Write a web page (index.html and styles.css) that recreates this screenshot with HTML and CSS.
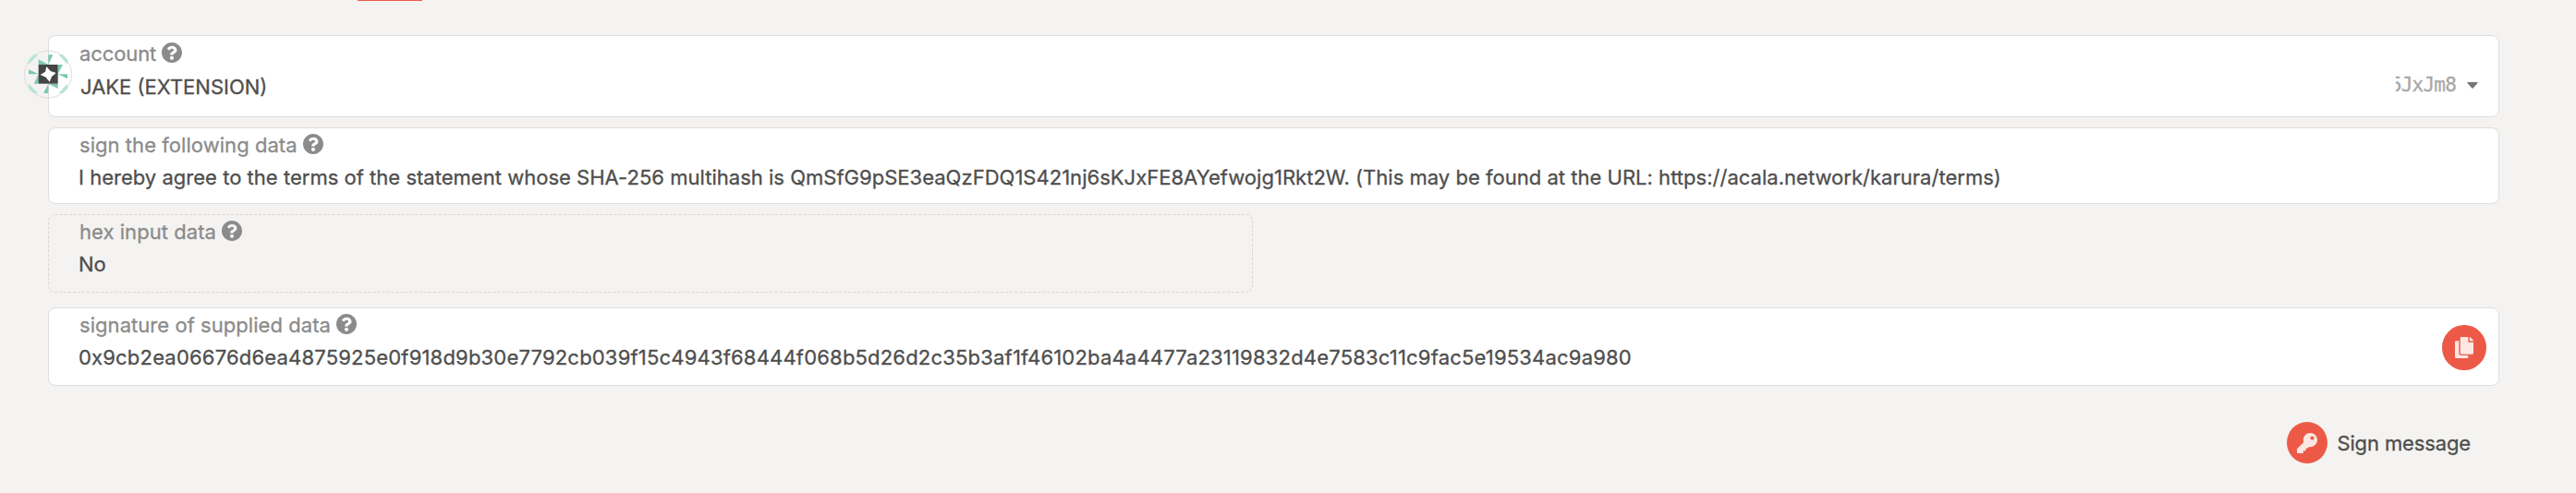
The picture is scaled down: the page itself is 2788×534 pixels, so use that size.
FILE: index.html
```html
<!DOCTYPE html>
<html lang="en">
<head>
<meta charset="utf-8">
<title>Sign message</title>
<link rel="stylesheet" href="styles.css">
</head>
<body>
<svg width="0" height="0" class="defs">
  <symbol id="help" viewBox="8 8 496 496"><path d="M504 256c0 136.997-111.043 248-248 248S8 392.997 8 256C8 119.083 119.043 8 256 8s248 111.083 248 248zM262.655 90c-54.497 0-89.255 22.957-116.549 63.758-3.536 5.286-2.353 12.415 2.715 16.258l34.699 26.31c5.205 3.947 12.621 3.008 16.665-2.122 17.864-22.658 30.113-35.797 57.303-35.797 20.429 0 45.698 13.148 45.698 32.958 0 14.976-12.363 22.667-32.534 33.976C247.128 238.528 216 254.941 216 296v4c0 6.627 5.373 12 12 12h56c6.627 0 12-5.373 12-12v-1.333c0-28.462 83.186-29.647 83.186-106.667 0-58.002-60.165-102-116.531-102zM256 338c-25.365 0-46 20.635-46 46 0 25.364 20.635 46 46 46s46-20.636 46-46c0-25.364-20.635-46-46-46z"/></symbol>
</svg>
<div class="tabs"><span class="tab-active"></span></div>
<main class="form">
  <section class="field account">
    <svg class="identicon" viewBox="78 162 156 159">
      <circle class="ring" cx="156" cy="241.500" r="76.500"/>
      <path class="pale" d="M93 195L110 178H124L93 209ZM190 178H204L219 193V209ZM93 272L124 303H110L93 288ZM219 272V288L204 303H190Z"/>
      <path class="green" d="M125 193L157 210H125ZM157 178H172L157 210ZM188 210H204L188 241ZM188 241H219V256ZM157 272H188V288ZM157 272V303H141ZM125 241V272H110ZM93 226L125 241H93Z"/>
      <path class="dark" d="M125 210H188V272H125Z"/>
      <path class="star" d="M151 216L164 231L182 237L168 249L161 266L149 251L131 243L147 233Z"/>
    </svg>
    <div class="label">account<svg class="help"><use href="#help"/></svg></div>
    <div class="value name">JAKE (EXTENSION)</div>
    <div class="selector"><span class="address">5JxJm8</span><svg class="caret" viewBox="0 0 12 7"><path d="M0.500 0H11.500Q12 .5 11.500 1L6.600 6.500Q6 7 5.400 6.500L.5 1Q0 .5 .5 0Z"/></svg></div>
  </section>
  <section class="field data">
    <div class="label">sign the following data<svg class="help"><use href="#help"/></svg></div>
    <div class="value message">I hereby agree to the terms of the statement whose SHA-256 multihash is QmSfG9pSE3eaQzFDQ1S421nj6sKJxFE8AYefwojg1Rkt2W. (This may be found at the URL: https://acala.network/karura/terms)</div>
  </section>
  <section class="field hex">
    <div class="label">hex input data<svg class="help"><use href="#help"/></svg></div>
    <div class="value">No</div>
  </section>
  <section class="field signature">
    <div class="label">signature of supplied data<svg class="help"><use href="#help"/></svg></div>
    <div class="value sig">0x9cb2ea06676d6ea4875925e0f918d9b30e7792cb039f15c4943f68444f068b5d26d2c35b3af1f46102ba4a4477a23119832d4e7583c11c9fac5e19534ac9a980</div>
    <button class="round copy" aria-label="copy"><svg viewBox="0 0 448 512"><path d="M320 448v40c0 13.255-10.745 24-24 24H24c-13.255 0-24-10.745-24-24V120c0-13.255 10.745-24 24-24h72v296c0 30.879 25.121 56 56 56h168zm0-344V0H152c-13.255 0-24 10.745-24 24v368c0 13.255 10.745 24 24 24h272c13.255 0 24-10.745 24-24V128H344c-13.200 0-24-10.800-24-24zm120.971-31.029L375.029 7.029A24 24 0 0 0 358.059 0H352v96h96v-6.059a24 24 0 0 0-7.029-16.970z"/></svg></button>
  </section>
  <div class="actions">
    <span class="round key"><svg viewBox="0 0 512 512"><path d="M512 176.001C512 273.203 433.202 352 336 352c-11.220 0-22.190-1.062-32.827-3.069l-24.012 27.014A23.999 23.999 0 0 1 261.223 384H224v40c0 13.255-10.745 24-24 24h-40v40c0 13.255-10.745 24-24 24H24c-13.255 0-24-10.745-24-24v-78.059c0-6.365 2.529-12.470 7.029-16.971l161.802-161.802C163.108 213.814 160 195.271 160 176 160 78.798 238.797.001 335.999 0 433.488-.001 512 78.511 512 176.001zM336 128c0 26.510 21.490 48 48 48s48-21.490 48-48-21.490-48-48-48-48 21.490-48 48z"/></svg></span>
    <span class="action-text">Sign message</span>
  </div>
</main>
</body>
</html>
```
FILE: styles.css
```css
* { box-sizing: border-box; }
body {
  margin: 0;
  height: 534px;
  overflow: hidden;
  background: #f4f3f1;
  color: #4e4e4e;
  font: 22px/35px Inter, "Liberation Sans", sans-serif;
  -webkit-text-stroke: 0.3px currentColor;
}
.defs { display: none; }
.tabs { height: 38px; padding-left: 387px; }
.tab-active { display: block; width: 70px; height: 1px; background: #ee5b46; }
.form { display: flex; flex-direction: column; width: 2653px; margin-left: 52px; }
.field {
  position: relative;
  padding: 1px 32px 0;
  background: #fff;
  border: 1px solid #dddedf;
  border-radius: 8px;
  white-space: nowrap;
}
.account { height: 89px; padding-top: 2px; }
.data { height: 83px; margin-top: 11px; }
.hex { width: 1304px; height: 85px; margin-top: 11px; background: transparent; border: 1px dashed #d6d6d5; }
.signature { height: 85px; margin-top: 16px; }
.label { display: flex; align-items: center; gap: 6px; height: 35px; padding-left: 1px; color: #8b8b8b; letter-spacing: 0.05px; }
.account .label { letter-spacing: -0.1px; }
.help { width: 22px; height: 22px; margin-top: -4px; fill: #8b8b8b; stroke: none; }
.value { height: 35px; }
.name { padding: 1px 0 0 2px; }
.message { letter-spacing: 0.02px; }
.sig { letter-spacing: 0.19px; }
.identicon { position: absolute; left: -27px; top: 15px; width: 52px; height: 53px; }
.ring { fill: none; stroke: #dcdddd; stroke-width: 3; }
.pale { fill: #b9e4d8; }
.green { fill: #7bc9b3; }
.dark { fill: #454545; }
.star { fill: #fff; }
.selector {
  position: absolute;
  right: 22px;
  top: 36px;
  display: flex;
  align-items: center;
  gap: 12px;
}
.address {
  display: flex;
  justify-content: flex-end;
  width: 65px;
  overflow: hidden;
  color: #a7a7a7;
  font: 21px/35px "DejaVu Sans Mono", monospace;
  letter-spacing: -0.8px;
}
.caret { width: 12px; height: 7px; margin-top: -1px; fill: #767676; }
.round {
  display: flex;
  align-items: center;
  justify-content: center;
  padding: 0;
  border: 0;
  border-radius: 50%;
  background: #ec5a47;
}
.round svg { fill: #fce7e2; }
.copy { position: absolute; right: 13px; top: 18px; width: 48px; height: 49px; }
.copy svg { width: 20px; height: 23px; }
.actions { display: flex; align-items: center; justify-content: flex-end; gap: 10px; margin-top: 39px; padding-right: 31px; }
.action-text { padding-top: 1px; letter-spacing: -0.13px; }
.key { width: 44px; height: 45px; }
.key svg { width: 22px; height: 22px; }
```
